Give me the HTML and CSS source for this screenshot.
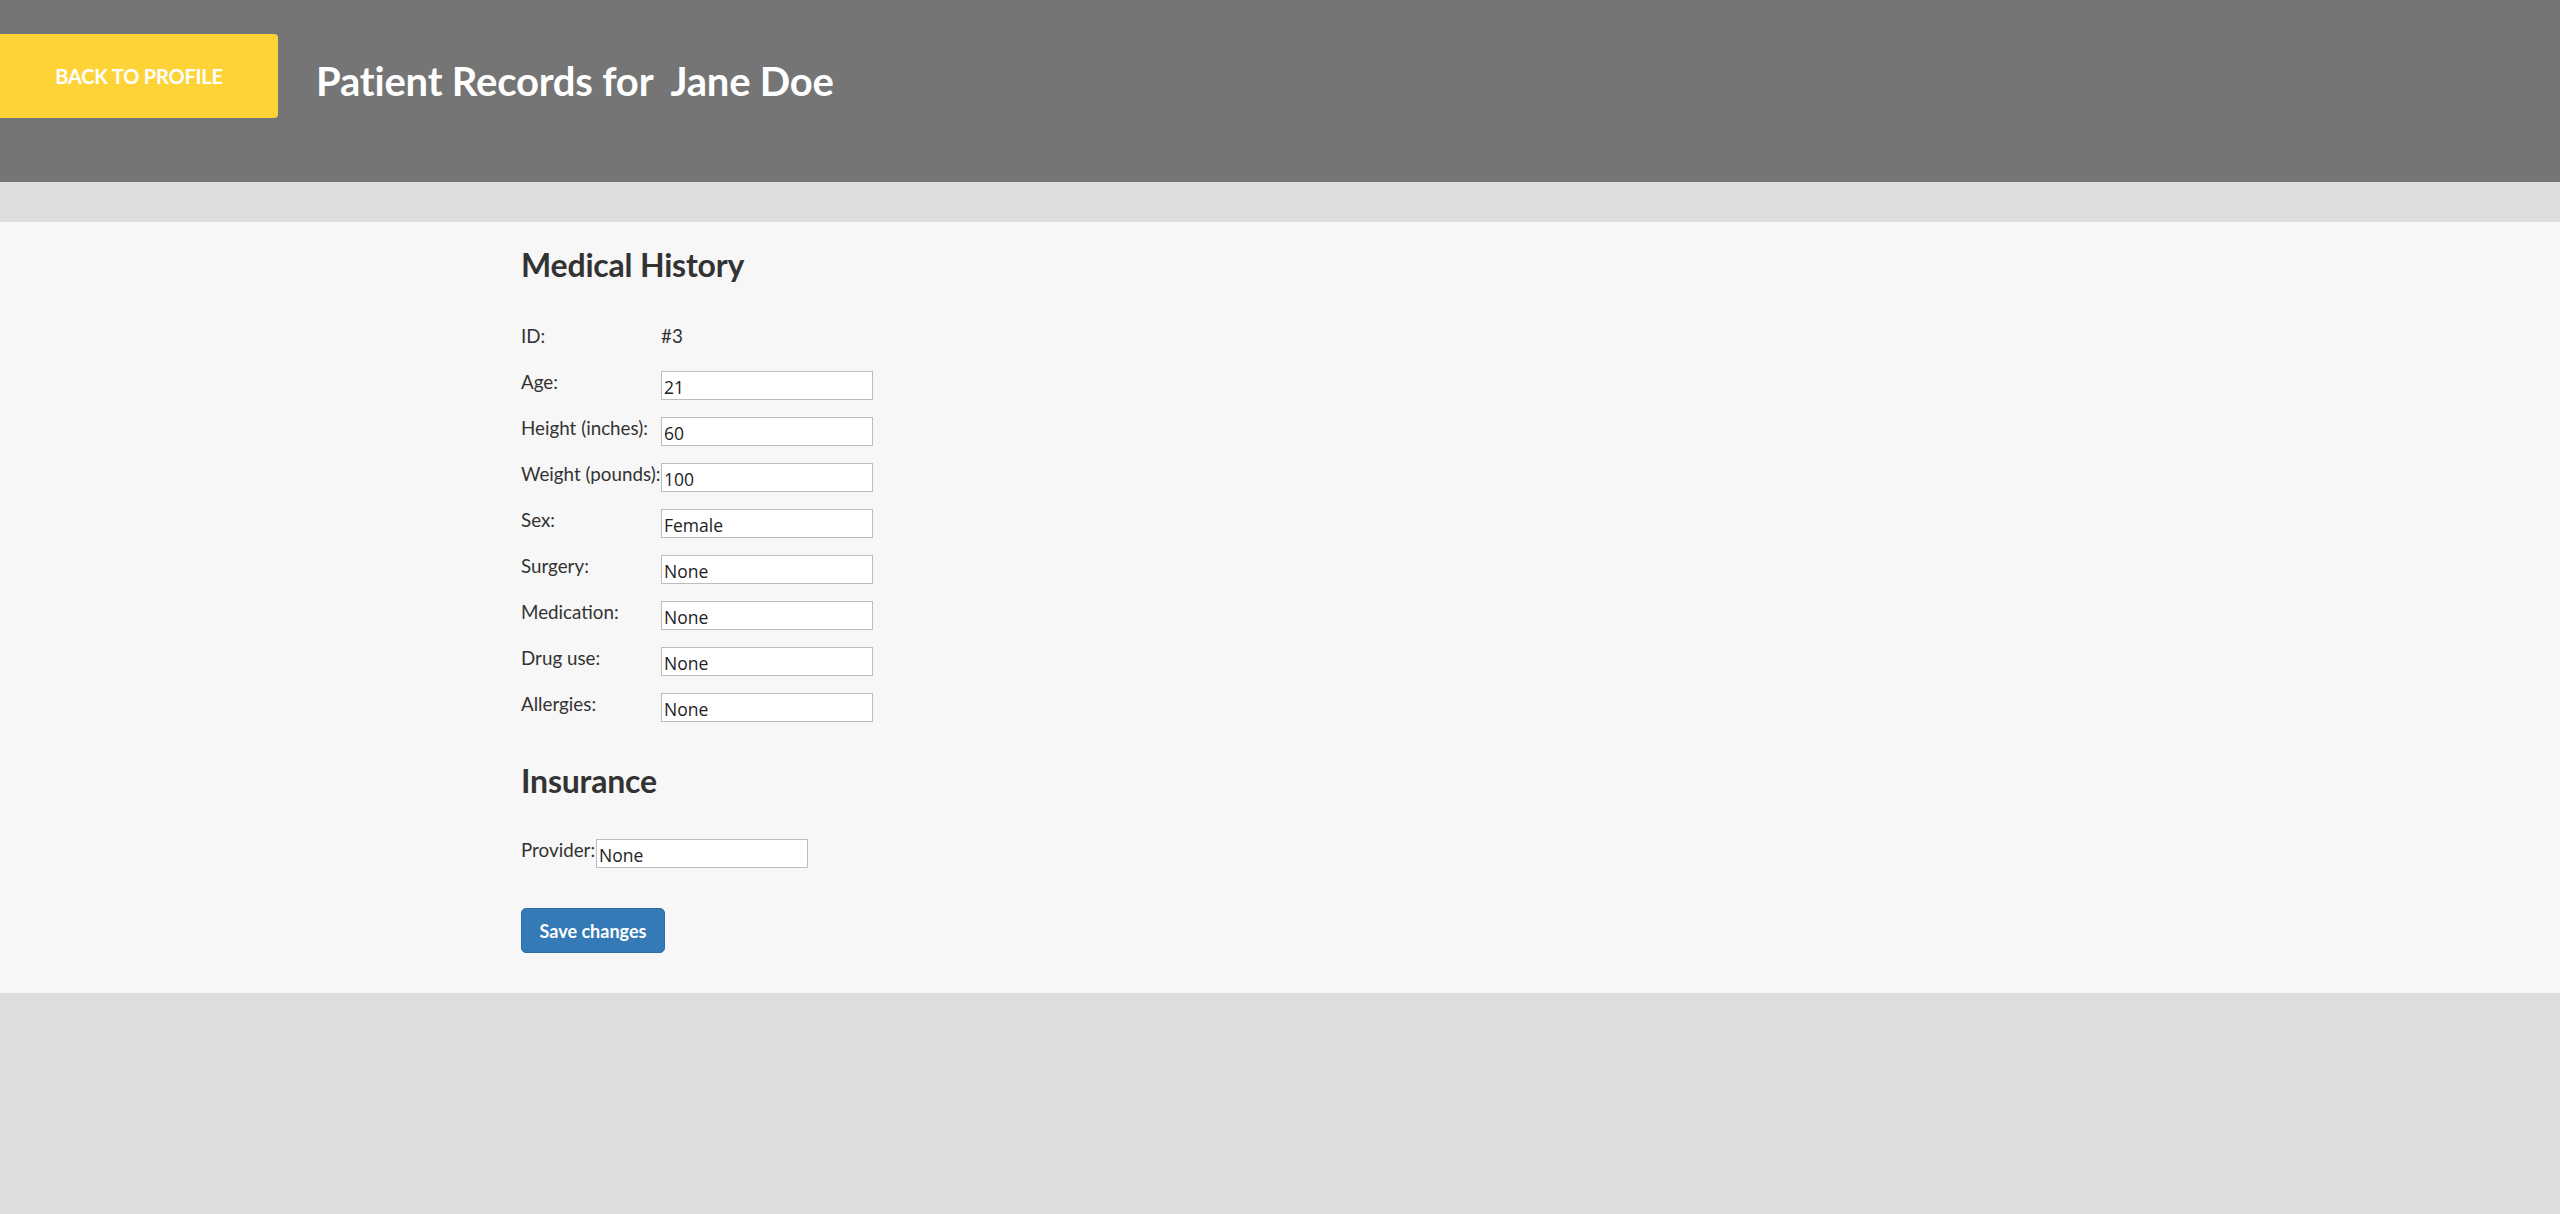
FILE: index.html
```html
<!DOCTYPE html>
<html lang="en">
<head>
<meta charset="utf-8">
<title>Patient Records</title>
<link rel="stylesheet" href="styles.css">
</head>
<body>
<header class="topbar">
  <a class="back-btn" href="#">Back to Profile</a>
  <h1 class="page-title">Patient Records for&nbsp; Jane Doe</h1>
</header>
<div class="band"></div>
<main class="panel">
  <div class="container">
    <h3 class="section-title first">Medical History</h3>
    <div class="rows">
      <div class="row"><span class="label">ID:</span><span class="value">#3</span></div>
      <div class="row"><label class="label">Age:</label><input class="field" type="text" value="21"></div>
      <div class="row"><label class="label">Height (inches):</label><input class="field" type="text" value="60"></div>
      <div class="row"><label class="label">Weight (pounds):</label><input class="field" type="text" value="100"></div>
      <div class="row"><label class="label">Sex:</label><input class="field" type="text" value="Female"></div>
      <div class="row"><label class="label">Surgery:</label><input class="field" type="text" value="None"></div>
      <div class="row"><label class="label">Medication:</label><input class="field" type="text" value="None"></div>
      <div class="row"><label class="label">Drug use:</label><input class="field" type="text" value="None"></div>
      <div class="row"><label class="label">Allergies:</label><input class="field" type="text" value="None"></div>
    </div>
    <h3 class="section-title second">Insurance</h3>
    <div class="row provider"><label class="label auto">Provider:</label><input class="field" type="text" value="None"></div>
    <button class="save-btn" type="button">Save changes</button>
  </div>
</main>
</body>
</html>
```
FILE: styles.css
```css
* { box-sizing: border-box; }
html, body {
  margin: 0;
  padding: 0;
  background: #dddddd;
  font-family: Lato, "Open Sans", Arial, sans-serif;
  color: #333333;
}
body { min-height: 1214px; }

.topbar {
  height: 182px;
  background: #757575;
  display: flex;
  align-items: flex-start;
  padding-top: 34px;
}
.back-btn {
  width: 278px;
  height: 84px;
  background: #fed337;
  border-radius: 0 4px 4px 0;
  color: #ffffff;
  text-decoration: none;
  text-transform: uppercase;
  font-weight: 700;
  font-size: 20px;
  letter-spacing: -0.2px;
  display: flex;
  align-items: center;
  justify-content: center;
  flex-shrink: 0;
}
.page-title {
  margin: 21px 0 0 38px;
  font-size: 40px;
  line-height: 52px;
  font-weight: 700;
  color: #ffffff;
  letter-spacing: -0.2px;
}

.band { height: 40px; }

.panel {
  background: #f7f7f7;
  padding: 24px 0 40px;
}
.container {
  margin-left: 521px;
  display: flex;
  flex-direction: column;
  align-items: flex-start;
}
.section-title {
  margin: 0;
  font-size: 32px;
  line-height: 38px;
  font-weight: 700;
  color: #333333;
  letter-spacing: -0.2px;
}
.section-title.first { margin-bottom: 41px; }
.section-title.second { margin-top: 40px; margin-bottom: 39px; }

.rows {
  display: flex;
  flex-direction: column;
  gap: 17px;
}
.row {
  display: flex;
  align-items: flex-start;
  min-height: 29px;
}
.label {
  width: 140px;
  flex-shrink: 0;
  font-size: 18.8px;
  line-height: 22px;
  color: #333333;
}
.label.auto { width: auto; margin-right: 1px; }
.value {
  font-size: 18.8px;
  line-height: 22px;
  color: #333333;
}
.field {
  width: 212px;
  height: 29px;
  margin: 0;
  border: 1px solid #bdbdbd;
  background: #ffffff;
  padding: 2px 2px 0;
  font-family: "Open Sans", "DejaVu Sans", sans-serif;
  font-size: 17.5px;
  color: #222222;
  outline: none;
}

.save-btn {
  margin-top: 40px;
  width: 144px;
  height: 45px;
  background: #337ab7;
  border: 1px solid #2e6da4;
  border-radius: 5px;
  color: #ffffff;
  font-family: Lato, "Open Sans", Arial, sans-serif;
  font-weight: 700;
  font-size: 18px;
  padding: 0;
  cursor: pointer;
}
```
